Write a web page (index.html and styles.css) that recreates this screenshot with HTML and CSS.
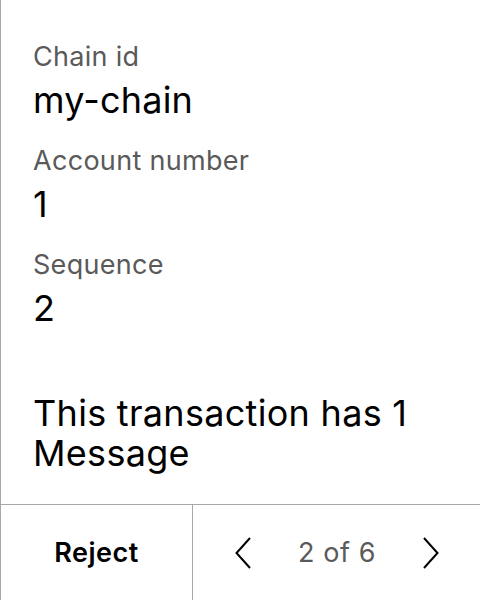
FILE: index.html
```html
<!DOCTYPE html>
<html>
<head>
<meta charset="utf-8">
<link rel="stylesheet" href="styles.css">
</head>
<body>
<div class="screen">
  <main class="content">
    <div class="field">
      <div class="label">Chain id</div>
      <div class="value">my-chain</div>
    </div>
    <div class="field">
      <div class="label">Account number</div>
      <div class="value">1</div>
    </div>
    <div class="field">
      <div class="label">Sequence</div>
      <div class="value">2</div>
    </div>
    <div class="summary">This transaction has 1 Message</div>
  </main>
  <footer class="footer">
    <div class="reject">Reject</div>
    <div class="pager">
      <svg class="chev" width="16" height="32" viewBox="0 0 16 32"><path d="M15 1 L1.5 16 L15 31" fill="none" stroke="#000" stroke-width="2"/></svg>
      <span class="count">2 of 6</span>
      <svg class="chev" width="16" height="32" viewBox="0 0 16 32"><path d="M1 1 L14.5 16 L1 31" fill="none" stroke="#000" stroke-width="2"/></svg>
    </div>
  </footer>
</div>
</body>
</html>
```

FILE: styles.css
```css
html, body {
  margin: 0;
  padding: 0;
  background: #fff;
}
.screen {
  width: 480px;
  height: 600px;
  box-sizing: border-box;
  border-left: 1px solid #a8a8a8;
  display: flex;
  flex-direction: column;
  font-family: Inter, "Noto Sans", sans-serif;
  color: #000;
}
.content {
  flex: 1;
  padding: 40px 0 0 32px;
  display: flex;
  flex-direction: column;
  gap: 18px;
}
.field {
  display: flex;
  flex-direction: column;
}
.label {
  font-size: 27px;
  line-height: 34px;
  letter-spacing: 0.3px;
  color: #5a5a5a;
}
.value {
  font-size: 36px;
  line-height: 52px;
  letter-spacing: 0.2px;
  color: #000;
}
.summary {
  margin-top: 41px;
  font-size: 36px;
  line-height: 40px;
  letter-spacing: 0.3px;
  padding-right: 40px;
}
.footer {
  height: 96px;
  border-top: 1px solid #a8a8a8;
  display: flex;
  box-sizing: border-box;
}
.reject {
  width: 191px;
  border-right: 1px solid #a8a8a8;
  display: flex;
  align-items: center;
  justify-content: center;
  font-size: 27px;
  font-weight: 600;
  letter-spacing: 0.5px;
}
.pager {
  flex: 1;
  display: flex;
  align-items: center;
  justify-content: space-between;
  padding: 0 41px 0 42px;
}
.count {
  font-size: 27px;
  letter-spacing: 0.6px;
  color: #5a5a5a;
}
.chev {
  display: block;
}
```
